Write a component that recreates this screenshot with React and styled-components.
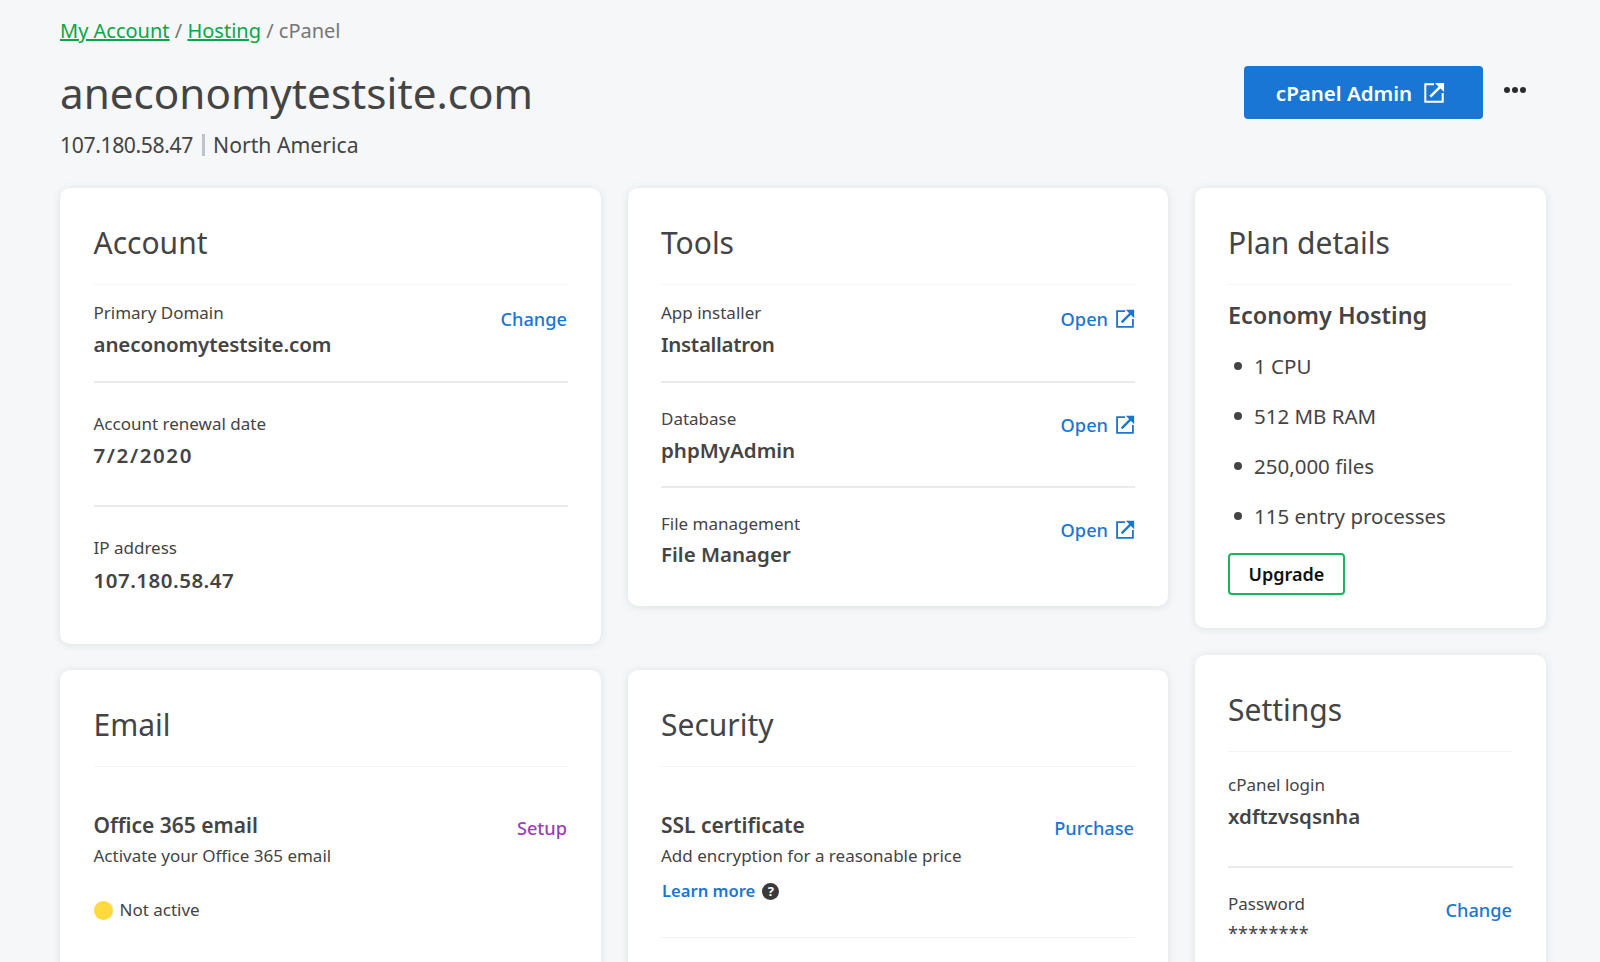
import React from "react";
import styled, { createGlobalStyle } from "styled-components";

const FONT = `"Noto Sans", "Liberation Sans", sans-serif`;

const Global = createGlobalStyle`
  html, body { margin: 0; padding: 0; height: 962px; overflow: hidden; background: #f5f7f8; }
  body { font-family: ${FONT}; color: #444; }
  * { box-sizing: border-box; }
`;

const Page = styled.div`
  width: 1600px;
  height: 962px;
  overflow: hidden;
  padding: 18px 54px 0 60px;
`;
const Crumbs = styled.nav`
  font-size: 20px;
  line-height: 26px;
  color: #767676;
`;
const CrumbLink = styled.a`
  color: #0aa648;
  text-decoration: underline;
`;
const Header = styled.header`
  display: flex;
  justify-content: space-between;
  align-items: flex-start;
  margin-top: 22px;
  height: 122px;
`;
const Title = styled.h1`
  margin: 0;
  font-size: 42.2px;
  line-height: 54px;
  font-weight: 400;
  color: #444;
`;
const Sub = styled.div`
  display: flex;
  align-items: center;
  font-size: 21.2px;
  line-height: 30px;
  margin-top: 10px;
  color: #444;
`;
const Ip = styled.span`
  letter-spacing: -0.4px;
`;
const Sep = styled.span`
  width: 3px;
  height: 22px;
  margin: 0 8px 0 9px;
  background: #bcc3cb;
`;
const Actions = styled.div`
  display: flex;
  align-items: flex-start;
  margin-right: 20px;
`;
const Primary = styled.button`
  display: flex;
  align-items: center;
  justify-content: center;
  gap: 11px;
  width: 239px;
  height: 53px;
  padding: 0 6px 0 0;
  border: 0;
  border-radius: 4px;
  background: #1a76d4;
  color: #fff;
  font: 600 20.5px ${FONT};
`;
const Dots = styled.button`
  display: flex;
  gap: 2px;
  margin: 21px 0 0 21px;
  padding: 0;
  border: 0;
  background: none;
`;
const Dot = styled.i`
  width: 6px;
  height: 6px;
  border-radius: 50%;
  background: #2b2b2b;
`;
const Board = styled.div`
  display: flex;
  gap: 26.5px;
  align-items: flex-start;
`;
const Main = styled.div`
  display: grid;
  grid-template-columns: 541px 540.5px;
  column-gap: 26.5px;
  row-gap: 26px;
  align-items: start;
`;
const Side = styled.div`
  display: flex;
  flex-direction: column;
  gap: 27px;
  width: 351.5px;
`;
const Card = styled.section`
  background: #fff;
  border-radius: 10px;
  padding: 0 33px 0 33.5px;
  box-shadow: 0 1px 8px rgba(60, 70, 80, 0.12);
`;
const CardTitle = styled.h2`
  margin: 0;
  padding: 37px 0 23px;
  font-size: 30px;
  line-height: 36px;
  font-weight: 400;
  color: #444;
  border-bottom: 1px solid #f3f4f5;
`;
const Row = styled.div`
  display: flex;
  justify-content: space-between;
  align-items: flex-start;
  padding: ${(p) => p.$pt}px 0 ${(p) => p.$pb}px;
  & + & { border-top: ${(p) => p.$line || 1}px solid #e9ebed; }
`;
const Label = styled.div`
  font-size: 17px;
  line-height: 24px;
  color: #444;
`;
const Value = styled.div`
  margin-top: ${(p) => p.$gap || 4}px;
  font-size: 20.5px;
  line-height: 30px;
  font-weight: 600;
  letter-spacing: ${(p) => p.$track || 0}px;
  color: #444;
`;
const Mask = styled.div`
  margin-top: 4px;
  font-size: 18px;
  line-height: 26px;
  letter-spacing: 0.2px;
  color: #444;
`;
const Action = styled.a`
  display: flex;
  align-items: center;
  gap: 7px;
  margin-top: 6px;
  margin-right: ${(p) => (p.$flush ? 0 : 1)}px;
  font-size: 18.2px;
  line-height: 24px;
  font-weight: 500;
  color: ${(p) => p.$color || "#1b76d3"};
`;
const PlanName = styled.div`
  padding-top: 14px;
  font-size: 23.4px;
  line-height: 32px;
  font-weight: 600;
  color: #444;
`;
const Bullets = styled.ul`
  list-style: none;
  margin: 10px 0 0;
  padding: 0;
`;
const Bullet = styled.li`
  display: flex;
  align-items: center;
  height: 50px;
  font-size: 20.5px;
  color: #444;
  &::before {
    content: "";
    width: 8px;
    height: 8px;
    border-radius: 50%;
    background: #444;
    margin: 0 12px 0 6px;
  }
`;
const Upgrade = styled.button`
  display: block;
  width: 117px;
  height: 42px;
  margin: 12px 0 33px;
  border: 2px solid #1bb35f;
  border-radius: 4px;
  background: #fff;
  color: #111;
  font: 600 18px ${FONT};
`;
const Feature = styled.div`
  display: flex;
  justify-content: space-between;
  align-items: flex-start;
  padding-top: 43px;
`;
const FeatureName = styled.div`
  font-size: 21px;
  line-height: 30px;
  font-weight: 600;
  color: #444;
`;
const FeatureText = styled.div`
  margin-top: 3px;
  font-size: 17px;
  line-height: 26px;
  color: #444;
`;
const Status = styled.div`
  display: flex;
  align-items: center;
  gap: 7px;
  margin-top: 28px;
  font-size: 17px;
  line-height: 26px;
`;
const Lamp = styled.span`
  width: 19px;
  height: 19px;
  border-radius: 50%;
  background: #ffd93d;
`;
const Learn = styled.div`
  display: flex;
  align-items: center;
  gap: 7px;
  margin: 9px 0 0 1px;
  font-size: 16.6px;
  line-height: 26px;
  font-weight: 600;
  color: #1b76d3;
`;
const Help = styled.span`
  display: inline-flex;
  align-items: center;
  justify-content: center;
  width: 17px;
  height: 17px;
  border-radius: 50%;
  background: #3a3a3a;
  color: #fff;
  font-size: 13px;
  font-weight: 700;
  line-height: 1;
`;
const SecurityRule = styled.div`
  margin-top: 33px;
  border-top: 1px solid #f1f2f3;
  height: 60px;
`;
const EmailFoot = styled.div`
  height: 60px;
`;

const External = ({ size = 20, color = "currentColor" }) => (
  <svg width={size} height={size} viewBox="0 0 24 24" fill="none">
    <path d="M12 2.5H2.5v19h19V12" stroke={color} strokeWidth="2.2" />
    <path d="M8 16L19 5" stroke={color} strokeWidth="2.8" />
    <path d="M13 1h10v10z" fill={color} />
  </svg>
);

const Open = () => (
  <Action $flush>
    Open <External />
  </Action>
);

export default function App() {
  return (
    <Page>
      <Global />
      <Crumbs>
        <CrumbLink href="#">My Account</CrumbLink> / <CrumbLink href="#">Hosting</CrumbLink> / cPanel
      </Crumbs>
      <Header>
        <div>
          <Title>aneconomytestsite.com</Title>
          <Sub>
            <Ip>107.180.58.47</Ip><Sep />North America
          </Sub>
        </div>
        <Actions>
          <Primary>
            cPanel Admin <External size={22} />
          </Primary>
          <Dots aria-label="More">
            <Dot /><Dot /><Dot />
          </Dots>
        </Actions>
      </Header>
      <Board>
        <Main>
          <Card>
            <CardTitle>Account</CardTitle>
            <Row $pt={16} $pb={22}>
              <div>
                <Label>Primary Domain</Label>
                <Value $track={-0.1}>aneconomytestsite.com</Value>
              </div>
              <Action>Change</Action>
            </Row>
            <Row $pt={29} $pb={35}>
              <div>
                <Label>Account renewal date</Label>
                <Value $track={1.6}>7/2/2020</Value>
              </div>
            </Row>
            <Row $pt={29} $pb={49}>
              <div>
                <Label>IP address</Label>
                <Value $gap={5} $track={0.5}>107.180.58.47</Value>
              </div>
            </Row>
          </Card>
          <Card>
            <CardTitle>Tools</CardTitle>
            <Row $pt={16} $pb={22}>
              <div>
                <Label>App installer</Label>
                <Value $track={-0.3}>Installatron</Value>
              </div>
              <Open />
            </Row>
            <Row $pt={24} $pb={21}>
              <div>
                <Label>Database</Label>
                <Value>phpMyAdmin</Value>
              </div>
              <Open />
            </Row>
            <Row $pt={24} $pb={37}>
              <div>
                <Label>File management</Label>
                <Value $gap={3}>File Manager</Value>
              </div>
              <Open />
            </Row>
          </Card>
          <Card>
            <CardTitle>Email</CardTitle>
            <Feature>
              <div>
                <FeatureName>Office 365 email</FeatureName>
                <FeatureText>Activate your Office 365 email</FeatureText>
                <Status>
                  <Lamp />
                  Not active
                </Status>
              </div>
              <Action $color="#a03fb3">Setup</Action>
            </Feature>
            <EmailFoot />
          </Card>
          <Card>
            <CardTitle>Security</CardTitle>
            <Feature>
              <div>
                <FeatureName>SSL certificate</FeatureName>
                <FeatureText>Add encryption for a reasonable price</FeatureText>
                <Learn>
                  Learn more <Help>?</Help>
                </Learn>
              </div>
              <Action>Purchase</Action>
            </Feature>
            <SecurityRule />
          </Card>
        </Main>
        <Side>
          <Card>
            <CardTitle>Plan details</CardTitle>
            <PlanName>Economy Hosting</PlanName>
            <Bullets>
              <Bullet>1 CPU</Bullet>
              <Bullet>512 MB RAM</Bullet>
              <Bullet>250,000 files</Bullet>
              <Bullet>115 entry processes</Bullet>
            </Bullets>
            <Upgrade>Upgrade</Upgrade>
          </Card>
          <Card>
            <CardTitle>Settings</CardTitle>
            <Row $pt={21} $pb={35}>
              <div>
                <Label>cPanel login</Label>
                <Value>xdftzvsqsnha</Value>
              </div>
            </Row>
            <Row $pt={24} $line={2} $pb={40}>
              <div>
                <Label>Password</Label>
                <Mask>********</Mask>
              </div>
              <Action>Change</Action>
            </Row>
          </Card>
        </Side>
      </Board>
    </Page>
  );
}
